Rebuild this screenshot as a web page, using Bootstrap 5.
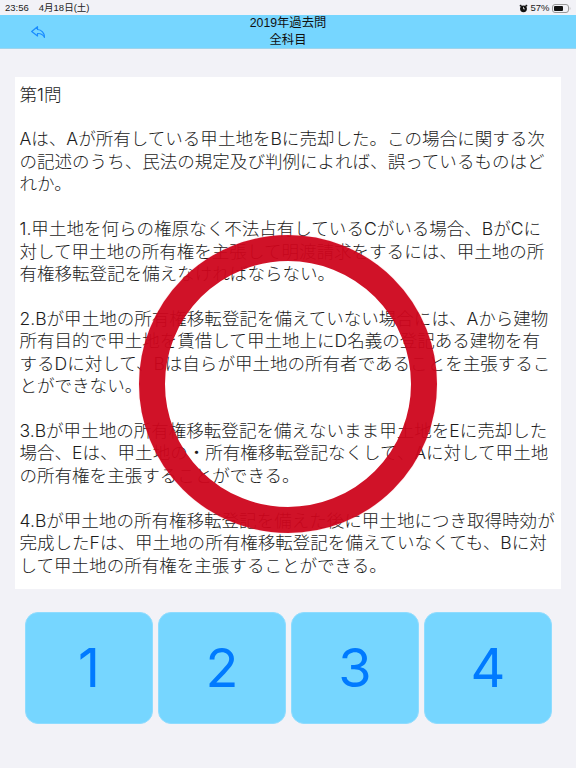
<!DOCTYPE html>
<html lang="ja">
<head>
<meta charset="utf-8">
<title>2019年過去問</title>
<link href="https://cdn.jsdelivr.net/npm/bootstrap@5.3.0/dist/css/bootstrap.min.css" rel="stylesheet">
<style>
html,body{height:768px;overflow:hidden}
body{background:#f2f2f7;font-family:"Liberation Sans","Noto Sans CJK JP",sans-serif;color:#111;position:relative}
.stat-bar{height:15px;padding:1px 5px 0;font-size:9.5px;line-height:14px;color:#222}
.stat-time{margin-right:10px}
.stat-right{column-gap:2.5px}
.head-bar{height:34px;background:#76d6ff;border-bottom:1px solid #9fd4ec;position:relative}
.head-title{font-size:12.3px;line-height:17px;color:#111}
.back-ico{position:absolute;left:31px;top:11px;width:14px;height:12px}
.q-card{margin:28px 15px 0;height:512px;background:#fff;padding:6.500px 4.500px 0;font-family:Inter,"Noto Sans CJK JP",sans-serif;font-size:17.55px;line-height:22.43px;font-weight:300;color:#1c1c1c}
.q-card p{margin:0 0 22.43px;white-space:nowrap}
.ans-row{margin:23px 24px 0 25px;gap:5px}
.ans-btn{width:128px;height:112px;flex:none;background:#76d6ff;border:1px solid #8edcff;border-radius:13px;color:#007aff;font-family:Inter,sans-serif;font-size:54px;padding:0;line-height:1}
.ans-btn:hover{background:#76d6ff;color:#007aff}
.ring-mark{position:absolute;left:139px;top:235px;width:298px;height:298px;border-radius:50%;border:26px solid rgba(205,5,28,.95);box-shadow:0 0 1px rgba(240,120,130,.7)}
</style>
</head>
<body>
<div class="stat-bar d-flex align-items-center justify-content-between">
  <div><span class="stat-time">23:56</span>4月18日(土)</div>
  <div class="stat-right d-flex align-items-center">
    <svg width="9" height="9" viewBox="0 0 10 10"><circle cx="5" cy="5.400" r="3.800" fill="#111"/><path d="M1 2.600 2.600 1M9 2.600 7.400 1" stroke="#111" stroke-width="1.500"/><path d="M5 3.200v2.200h1.600" stroke="#fff" stroke-width=".8" fill="none"/></svg>
    <span>57%</span>
    <svg width="19" height="9" viewBox="0 0 19 9"><rect x=".5" y=".5" width="16" height="8" rx="2.500" fill="none" stroke="#999"/><rect x="2" y="2" width="9" height="5" rx="1" fill="#111"/><path d="M17.800 3c.7.3.7 2.700 0 3z" fill="#999"/></svg>
  </div>
</div>
<div class="head-bar text-center">
  <svg class="back-ico" viewBox="0 0 14 12"><path d="M6.500.7.700 5.500 6.500 10V7.500C9.500 7.300 12 8.500 13.500 11.500 13.500 7 10.500 3.700 6.500 3.500Z" fill="none" stroke="#1a8cff" stroke-width="1.200" stroke-linejoin="round"/></svg>
  <div class="head-title">2019年過去問<br>全科目</div>
</div>
<div class="q-card">
  <p>第1問</p>
  <p>Aは、Aが所有している甲土地をBに売却した。この場合に関する次<br>の記述のうち、民法の規定及び判例によれば、誤っているものはど<br>れか。</p>
  <p>1.甲土地を何らの権原なく不法占有しているCがいる場合、BがCに<br>対して甲土地の所有権を主張して明渡請求をするには、甲土地の所<br>有権移転登記を備えなければならない。</p>
  <p>2.Bが甲土地の所有権移転登記を備えていない場合には、Aから建物<br>所有目的で甲土地を賃借して甲土地上にD名義の登記ある建物を有<br>するDに対して、Bは自らが甲土地の所有者であることを主張するこ<br>とができない。</p>
  <p>3.Bが甲土地の所有権移転登記を備えないまま甲土地をEに売却した<br>場合、Eは、甲土地の・所有権移転登記なくして、Aに対して甲土地<br>の所有権を主張することができる。</p>
  <p>4.Bが甲土地の所有権移転登記を備えた後に甲土地につき取得時効が<br>完成したFは、甲土地の所有権移転登記を備えていなくても、Bに対<br>して甲土地の所有権を主張することができる。</p>
</div>
<div class="ans-row d-flex">
  <button type="button" class="btn ans-btn">1</button>
  <button type="button" class="btn ans-btn">2</button>
  <button type="button" class="btn ans-btn">3</button>
  <button type="button" class="btn ans-btn">4</button>
</div>
<div class="ring-mark"></div>
</body>
</html>
